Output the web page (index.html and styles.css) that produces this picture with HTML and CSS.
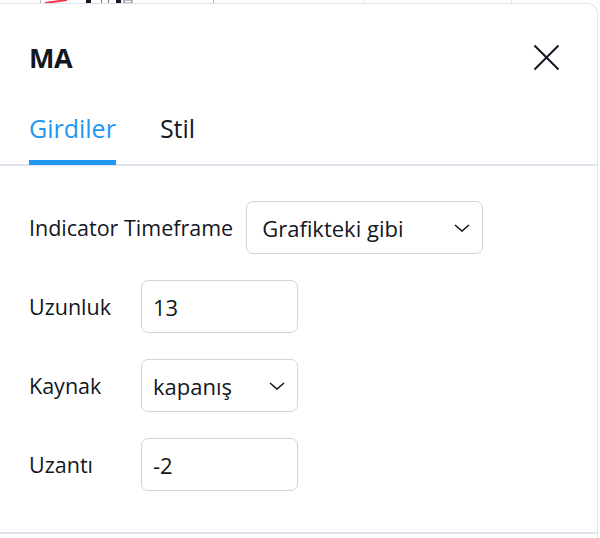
FILE: index.html
```html
<!DOCTYPE html>
<html lang="tr">
<head>
<meta charset="utf-8">
<title>MA</title>
<link rel="stylesheet" href="styles.css">
</head>
<body>
<svg class="chart-strip" width="600" height="3" viewBox="0 0 600 3">
  <line x1="40.5" y1="0" x2="40.5" y2="3" stroke="#b2b5be" stroke-width="1"/>
  <line x1="45" y1="3" x2="67" y2="0" stroke="#f23645" stroke-width="2"/>
  <rect x="86" y="0" width="5" height="3" fill="#131722"/>
  <line x1="101.5" y1="0" x2="101.5" y2="3" stroke="#787b86" stroke-width="1"/>
  <line x1="108.5" y1="0" x2="108.5" y2="3" stroke="#787b86" stroke-width="1"/>
  <rect x="116" y="0" width="5" height="3" fill="#131722"/>
  <rect x="124" y="0" width="8" height="3" fill="none" stroke="#787b86" stroke-width="1"/>
  <line x1="213.5" y1="0" x2="213.5" y2="3" stroke="#b2b5be" stroke-width="1"/>
  <line x1="363.5" y1="0" x2="363.5" y2="3" stroke="#e0e3eb" stroke-width="1"/>
  <line x1="511.5" y1="0" x2="511.5" y2="3" stroke="#e0e3eb" stroke-width="1"/>
</svg>
<div class="dialog">
  <div class="dialog-header">
    <h1 class="dialog-title">MA</h1>
    <button class="close-btn" aria-label="Kapat">
      <svg width="27" height="27" viewBox="0 0 27 27"><path d="M1.5 1.5 L25.5 25.5 M25.5 1.5 L1.5 25.5" stroke="#131722" stroke-width="2" fill="none"/></svg>
    </button>
  </div>
  <div class="tabs">
    <div class="tab tab-active">Girdiler</div>
    <div class="tab">Stil</div>
  </div>
  <div class="dialog-body">
    <div class="row">
      <span class="label">Indicator Timeframe</span>
      <div class="field field-wide">
        <span class="value">Grafikteki gibi</span>
        <svg class="chevron" width="16" height="8" viewBox="0 0 16 8"><path d="M1 1 L8 7 L15 1" stroke="#131722" stroke-width="1.6" fill="none"/></svg>
      </div>
    </div>
    <div class="row">
      <span class="label label-fixed">Uzunluk</span>
      <div class="field field-narrow"><span class="value">13</span></div>
    </div>
    <div class="row">
      <span class="label label-fixed">Kaynak</span>
      <div class="field field-narrow">
        <span class="value">kapanış</span>
        <svg class="chevron" width="16" height="8" viewBox="0 0 16 8"><path d="M1 1 L8 7 L15 1" stroke="#131722" stroke-width="1.6" fill="none"/></svg>
      </div>
    </div>
    <div class="row">
      <span class="label label-fixed">Uzantı</span>
      <div class="field field-narrow"><span class="value">-2</span></div>
    </div>
  </div>
  <div class="dialog-footer"></div>
</div>
</body>
</html>
```

FILE: styles.css
```css
* { box-sizing: border-box; }

html, body {
  margin: 0;
  padding: 0;
  background: #ffffff;
  width: 600px;
  height: 538px;
  overflow: hidden;
  font-family: "Open Sans", "Noto Sans", "DejaVu Sans", sans-serif;
  color: #131722;
}

.chart-strip {
  display: block;
}

.dialog {
  width: 598px;
  background: #ffffff;
  border-top: 1px solid #e0e3eb;
  border-right: 1px solid #e0e3eb;
  border-radius: 0 10px 0 0;
}

.dialog-header {
  height: 106px;
  display: flex;
  align-items: center;
  justify-content: space-between;
  padding: 0 37px 0 29px;
}

.dialog-title {
  margin: 0;
  font-size: 27px;
  font-weight: 700;
  letter-spacing: -0.5px;
}

.close-btn {
  border: 0;
  background: none;
  padding: 0;
  width: 27px;
  height: 27px;
  display: flex;
}

.tabs {
  display: flex;
  gap: 44px;
  padding: 0 29px;
  border-bottom: 2px solid #e0e3eb;
}

.tab {
  font-size: 25px;
  line-height: 28px;
  padding-top: 4px;
  padding-bottom: 18px;
  border-bottom: 5px solid transparent;
  margin-bottom: -1px;
}

.tab-active {
  color: #2196f3;
  border-bottom-color: #2196f3;
}

.dialog-body {
  padding: 35px 29px 41px;
  display: flex;
  flex-direction: column;
  gap: 26px;
}

.row {
  display: flex;
  align-items: center;
  gap: 13px;
}

.label {
  font-size: 21.5px;
  line-height: 28px;
}

.label-fixed {
  width: 99px;
}

.field {
  height: 53px;
  border: 1.5px solid #d1d4dc;
  border-radius: 7px;
  display: flex;
  align-items: center;
  justify-content: space-between;
  font-size: 22px;
}

.field-wide {
  width: 237px;
  padding: 0 12px 0 15px;
}

.field-narrow {
  width: 157px;
  padding: 0 12px 0 11px;
}

.chevron {
  display: block;
}

.dialog-footer {
  border-top: 2px solid #e0e3eb;
  height: 6px;
}
```
